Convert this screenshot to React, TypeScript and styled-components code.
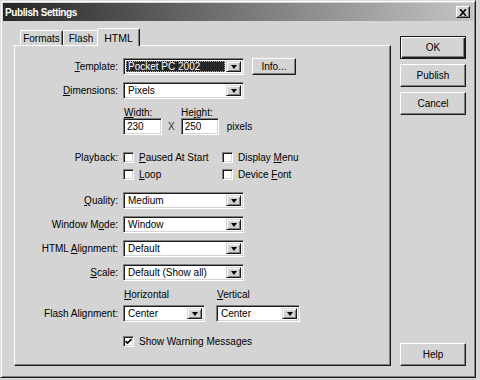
import styled, { createGlobalStyle } from "styled-components";

const GlobalStyle = createGlobalStyle`
  html, body {
    margin: 0;
    padding: 0;
    background: #d6d6d6;
  }
  body {
    font-family: "Liberation Sans", Arial, sans-serif;
    font-size: 10px;
    color: #000;
  }
`;

const Window = styled.div`
  width: 476px;
  height: 378px;
  box-sizing: border-box;
  background: #d4d4d4;
  border: 1px solid;
  border-color: #dcdcdc #1a1a1a #1a1a1a #dcdcdc;
  box-shadow: inset 1px 1px 0 #ffffff, inset -1px -1px 0 #808080;
  padding: 2px;
  display: flex;
  flex-direction: column;
`;

const TitleBar = styled.div`
  height: 18px;
  display: flex;
  align-items: center;
  justify-content: space-between;
  padding: 0 2px 0 2px;
  background: linear-gradient(to right, #262626 0%, #6e6e6e 45%, #c4c4c4 100%);
`;

const Title = styled.span`
  color: #fff;
  font-weight: bold;
  font-size: 10px;
  letter-spacing: -0.4px;
`;

const CloseButton = styled.div`
  width: 14px;
  height: 12px;
  box-sizing: border-box;
  background: #d4d4d4;
  border: 1px solid;
  border-color: #fff #1a1a1a #1a1a1a #fff;
  box-shadow: inset -1px -1px 0 #808080;
  display: flex;
  align-items: center;
  justify-content: center;
  margin-right: 1px;
`;

const Body = styled.div`
  flex: 1;
  display: flex;
  padding: 7px 0 9px 11px;
`;

const LeftCol = styled.div`
  width: 377px;
  display: flex;
  flex-direction: column;
`;

const TabStrip = styled.div`
  height: 17px;
  display: flex;
  align-items: flex-end;
  padding-left: 6px;
  position: relative;
  z-index: 1;
`;

const Tab = styled.div<{ $active?: boolean; $w: number }>`
  width: ${(p) => p.$w}px;
  height: ${(p) => (p.$active ? 18 : 15)}px;
  box-sizing: border-box;
  margin: ${(p) => (p.$active ? "0 -2px -1px -2px" : "0")};
  background: #d4d4d4;
  border-top: 1px solid #fff;
  border-left: 1px solid #fff;
  border-right: 1px solid #1a1a1a;
  border-radius: 2px 2px 0 0;
  box-shadow: inset -1px 0 0 #808080;
  display: flex;
  align-items: ${(p) => (p.$active ? "flex-start" : "center")};
  padding-top: ${(p) => (p.$active ? 3 : 0)}px;
  justify-content: center;
  font-size: ${(p) => (p.$active ? 10.5 : 10)}px;
  position: relative;
  z-index: ${(p) => (p.$active ? 2 : 0)};
`;

const Panel = styled.div`
  flex: 1;
  box-sizing: border-box;
  border: 1px solid;
  border-color: #fff #1a1a1a #1a1a1a #fff;
  box-shadow: inset -1px -1px 0 #808080;
  padding: 12px 0 0 1px;
  display: flex;
  flex-direction: column;
`;

const RightCol = styled.div`
  width: 66px;
  margin-left: 9px;
  padding-top: 8px;
  display: flex;
  flex-direction: column;
  gap: 5px;
`;

const PushButton = styled.div<{ $default?: boolean; $bottom?: boolean }>`
  height: 23px;
  box-sizing: border-box;
  background: #d4d4d4;
  border: 1px solid;
  border-color: ${(p) =>
    p.$default ? "#1a1a1a" : "#fff #1a1a1a #1a1a1a #fff"};
  box-shadow: ${(p) =>
    p.$default
      ? "inset 1px 1px 0 #fff, inset -1px -1px 0 #1a1a1a, inset -2px -2px 0 #808080"
      : "inset -1px -1px 0 #808080"};
  display: flex;
  align-items: center;
  justify-content: center;
  margin-top: ${(p) => (p.$bottom ? "auto" : "0")};
`;

const Row = styled.div<{ $mt?: number }>`
  display: flex;
  align-items: center;
  margin-top: ${(p) => p.$mt ?? 0}px;
`;

const Label = styled.div<{ $top?: boolean }>`
  width: 102px;
  margin-right: 5px;
  flex-shrink: 0;
  text-align: right;
  white-space: nowrap;
  align-self: ${(p) => (p.$top ? "flex-start" : "center")};
`;

const Key = styled.span`
  text-decoration: underline;
`;

const SelectBox = styled.div<{ $w: number }>`
  width: ${(p) => p.$w}px;
  height: 17px;
  box-sizing: border-box;
  background: #fff;
  border: 1px solid;
  border-color: #808080 #fff #fff #808080;
  box-shadow: inset 1px 1px 0 #1a1a1a, inset -1px -1px 0 #d4d4d4;
  padding: 2px;
  display: flex;
  flex-shrink: 0;
`;

const Field = styled.div<{ $selected?: boolean }>`
  flex: 1;
  display: flex;
  align-items: center;
  padding-left: 2px;
  margin-right: 1px;
  background: ${(p) => (p.$selected ? "#262626" : "transparent")};
  color: ${(p) => (p.$selected ? "#fff" : "#000")};
  outline: ${(p) => (p.$selected ? "1px dotted #b0b0b0" : "none")};
  outline-offset: -1px;
  white-space: nowrap;
  overflow: hidden;
`;

const ArrowButton = styled.div`
  width: 15px;
  box-sizing: border-box;
  background: #d4d4d4;
  border: 1px solid;
  border-color: #d4d4d4 #1a1a1a #1a1a1a #d4d4d4;
  box-shadow: inset 1px 1px 0 #fff, inset -1px -1px 0 #808080;
  display: flex;
  align-items: center;
  justify-content: center;
`;

const Arrow = styled.div`
  width: 0;
  height: 0;
  border-left: 3.5px solid transparent;
  border-right: 3.5px solid transparent;
  border-top: 4px solid #000;
`;

const TextInput = styled.div<{ $w: number }>`
  width: ${(p) => p.$w}px;
  height: 17px;
  box-sizing: border-box;
  background: #fff;
  border: 1px solid;
  border-color: #808080 #fff #fff #808080;
  box-shadow: inset 1px 1px 0 #1a1a1a, inset -1px -1px 0 #d4d4d4;
  display: flex;
  align-items: center;
  padding-left: 3px;
  flex-shrink: 0;
`;

const SmallButton = styled.div`
  width: 44px;
  height: 17px;
  box-sizing: border-box;
  margin-left: 8px;
  background: #d4d4d4;
  border: 1px solid;
  border-color: #fff #1a1a1a #1a1a1a #fff;
  box-shadow: inset -1px -1px 0 #808080;
  display: flex;
  align-items: center;
  justify-content: center;
`;

const Cell = styled.div<{ $w: number; $pl?: number }>`
  width: ${(p) => p.$w}px;
  padding-left: ${(p) => p.$pl ?? 0}px;
  box-sizing: border-box;
  flex-shrink: 0;
  white-space: nowrap;
`;

const CheckGrid = styled.div`
  display: grid;
  grid-template-columns: 99px auto;
  row-gap: 6px;
`;

const Check = styled.div`
  display: flex;
  align-items: center;
  height: 11px;
  white-space: nowrap;
`;

const Box = styled.div`
  width: 11px;
  height: 11px;
  box-sizing: border-box;
  background: #fff;
  border: 1px solid;
  border-color: #808080 #fff #fff #808080;
  box-shadow: inset 1px 1px 0 #1a1a1a, inset -1px -1px 0 #d4d4d4;
  margin-right: 5px;
  display: flex;
  align-items: center;
  justify-content: center;
  flex-shrink: 0;
`;

const Sep = styled.span`
  margin: 0 6px;
  color: #333;
`;

const Select = ({
  w,
  value,
  selected,
}: {
  w: number;
  value: string;
  selected?: boolean;
}) => (
  <SelectBox $w={w}>
    <Field $selected={selected}>{value}</Field>
    <ArrowButton>
      <Arrow />
    </ArrowButton>
  </SelectBox>
);

const CheckBox = ({
  checked,
  children,
}: {
  checked?: boolean;
  children: React.ReactNode;
}) => (
  <Check>
    <Box>
      {checked && (
        <svg width="7" height="7" viewBox="0 0 7 7">
          <path d="M0.5 3 L2.5 5 L6.5 1" stroke="#000" strokeWidth="1.6" fill="none" />
        </svg>
      )}
    </Box>
    <span>{children}</span>
  </Check>
);

const App = () => {
  return (
    <>
      <GlobalStyle />
      <Window>
        <TitleBar>
          <Title>Publish Settings</Title>
          <CloseButton>
            <svg width="8" height="7" viewBox="0 0 8 7">
              <path d="M1 0 L7 7 M7 0 L1 7" stroke="#000" strokeWidth="1.6" />
            </svg>
          </CloseButton>
        </TitleBar>
        <Body>
          <LeftCol>
            <TabStrip>
              <Tab $w={43}>Formats</Tab>
              <Tab $w={36}>Flash</Tab>
              <Tab $w={43} $active>
                HTML
              </Tab>
            </TabStrip>
            <Panel>
              <Row>
                <Label>
                  <Key>T</Key>emplate:
                </Label>
                <Select w={121} value="Pocket PC 2002" selected />
                <SmallButton>Info...</SmallButton>
              </Row>
              <Row $mt={7}>
                <Label>
                  <Key>D</Key>imensions:
                </Label>
                <Select w={121} value="Pixels" />
              </Row>
              <Row $mt={8}>
                <Label />
                <Cell $w={58} $pl={1}>
                  <Key>W</Key>idth:
                </Cell>
                <Cell $w={60}>
                  He<Key>i</Key>ght:
                </Cell>
              </Row>
              <Row>
                <Label />
                <TextInput $w={39}>230</TextInput>
                <Sep>X</Sep>
                <TextInput $w={38}>250</TextInput>
                <Cell $w={40} $pl={8}>
                  pixels
                </Cell>
              </Row>
              <Row $mt={17}>
                <Label $top>Playback:</Label>
                <CheckGrid>
                  <CheckBox>
                    <Key>P</Key>aused At Start
                  </CheckBox>
                  <CheckBox>
                    Display <Key>M</Key>enu
                  </CheckBox>
                  <CheckBox>
                    <Key>L</Key>oop
                  </CheckBox>
                  <CheckBox>
                    Device <Key>F</Key>ont
                  </CheckBox>
                </CheckGrid>
              </Row>
              <Row $mt={12}>
                <Label>
                  <Key>Q</Key>uality:
                </Label>
                <Select w={121} value="Medium" />
              </Row>
              <Row $mt={7}>
                <Label>
                  Window M<Key>o</Key>de:
                </Label>
                <Select w={121} value="Window" />
              </Row>
              <Row $mt={7}>
                <Label>
                  HTML <Key>A</Key>lignment:
                </Label>
                <Select w={121} value="Default" />
              </Row>
              <Row $mt={7}>
                <Label>
                  <Key>S</Key>cale:
                </Label>
                <Select w={121} value="Default (Show all)" />
              </Row>
              <Row $mt={8}>
                <Label />
                <Cell $w={93} $pl={1}>
                  <Key>H</Key>orizontal
                </Cell>
                <Cell $w={80} $pl={1}>
                  <Key>V</Key>ertical
                </Cell>
              </Row>
              <Row $mt={5}>
                <Label>Flash Alignment:</Label>
                <Select w={82} value="Center" />
                <Cell $w={11} />
                <Select w={84} value="Center" />
              </Row>
              <Row $mt={14}>
                <Label />
                <CheckBox checked>Show Warning Messages</CheckBox>
              </Row>
            </Panel>
          </LeftCol>
          <RightCol>
            <PushButton $default>OK</PushButton>
            <PushButton>Publish</PushButton>
            <PushButton>Cancel</PushButton>
            <PushButton $bottom>Help</PushButton>
          </RightCol>
        </Body>
      </Window>
    </>
  );
};

export default App;
